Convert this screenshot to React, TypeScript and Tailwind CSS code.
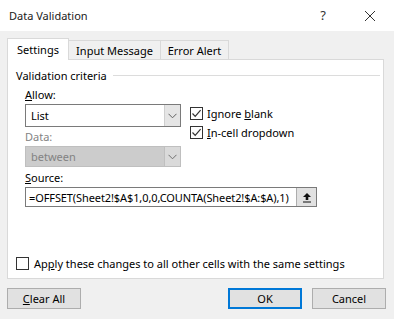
import React from "react";

const font = { fontFamily: '"Noto Sans", "Segoe UI", sans-serif' };

function Chevron({ color = "#606060" }: { color?: string }) {
  return (
    <svg width="9" height="6" viewBox="0 0 9 6">
      <path d="M0.5 0.8 L4.5 4.8 L8.5 0.8" fill="none" stroke={color} strokeWidth="1" />
    </svg>
  );
}

function Check({ checked }: { checked: boolean }) {
  return (
    <div className="w-[13px] h-[13px] border border-[#333333] bg-white flex items-center justify-center shrink-0">
      {checked && (
        <svg width="11" height="11" viewBox="0 0 11 11">
          <path d="M1.5 5.5 L4.2 8.3 L9.6 2.2" fill="none" stroke="#333333" strokeWidth="1.2" />
        </svg>
      )}
    </div>
  );
}

export default function App() {
  return (
    <div className="w-[394px] h-[319px] bg-[#f0f0f0] text-[11px] leading-[15px] text-black overflow-hidden flex flex-col" style={font}>
      <div className="h-[31px] bg-white flex items-center pl-[9px] shrink-0">
        <span className="text-[11px] text-[#1a1a1a]">Data Validation</span>
        <span className="ml-auto w-[12px] text-center text-[13px] text-[#333]">?</span>
        <span className="ml-[35px] mr-[18px] flex">
          <svg width="12" height="12" viewBox="0 0 12 12">
            <path d="M1 1 L11 11 M11 1 L1 11" stroke="#333" strokeWidth="1" />
          </svg>
        </span>
      </div>

      <div className="flex items-end pl-[7px] mt-[7px] h-[22px] relative z-10">
        <div className="h-[22px] w-[62px] bg-white border border-b-0 border-[#d9d9d9] flex items-center justify-center">Settings</div>
        <div className="h-[20px] w-[92px] border-t border-r border-[#d9d9d9] flex items-center justify-center">Input Message</div>
        <div className="h-[20px] w-[68px] border-t border-r border-[#d9d9d9] flex items-center justify-center">Error Alert</div>
      </div>

      <div className="ml-[7px] mt-[-1px] w-[377px] h-[220px] bg-white border border-[#d9d9d9] relative flex flex-col">
        <div className="flex items-center mt-[8px] pl-[8px] pr-[3px]">
          <span>Validation criteria</span>
          <div className="flex-1 h-px bg-[#dcdcdc] ml-[6px]" />
        </div>

        <div className="flex pl-[17px]">
          <div className="flex flex-col w-[156px]">
            <div className="mt-[4px]"><span className="underline">A</span>llow:</div>
            <div className="mt-[2px] h-[23px] border border-[#7a7a7a] flex items-center">
              <span className="pl-[5px] flex-1">List</span>
              <div className="w-[16px] h-full bg-[#e5e5e5] border-l border-[#cfcfcf] flex items-center justify-center">
                <Chevron />
              </div>
            </div>
            <div className="mt-[2px] text-[#838383]">Data:</div>
            <div className="mt-[2px] h-[21px] bg-[#cccccc] border border-[#bfbfbf] flex items-center">
              <span className="pl-[5px] flex-1 text-[#838383]">between</span>
              <div className="w-[16px] h-full bg-[#dadada] border-l border-[#bfbfbf] flex items-center justify-center">
                <Chevron color="#707070" />
              </div>
            </div>
          </div>
          <div className="flex flex-col ml-[9px] mt-[23px] gap-[4px]">
            <div className="flex items-center gap-[4px]">
              <Check checked />
              <span>Ignore <span className="underline">b</span>lank</span>
            </div>
            <div className="flex items-center gap-[4px]">
              <Check checked />
              <span><span className="underline">I</span>n-cell dropdown</span>
            </div>
          </div>
        </div>

        <div className="pl-[17px] mt-[3px]"><span className="underline">S</span>ource:</div>
        <div className="ml-[17px] mt-[2px] flex h-[20px] w-[292px] border border-[#7a7a7a]">
          <div className="flex-1 flex items-center pl-[3px] tracking-[-0.1px] whitespace-nowrap overflow-hidden">=OFFSET(Sheet2!$A$1,0,0,COUNTA(Sheet2!$A:$A),1)</div>
          <div className="w-[20px] h-full bg-[#e1e1e1] border-l border-[#adadad] flex items-center justify-center">
            <svg width="10" height="11" viewBox="0 0 10 11">
              <path d="M5 1 L9 5 L6.3 5 L6.3 8 L3.7 8 L3.7 5 L1 5 Z" fill="#111" />
              <path d="M1 10 L9 10" stroke="#111" strokeWidth="1" />
            </svg>
          </div>
        </div>

        <div className="mt-auto mb-[7px] flex items-center pl-[8px] gap-[5px]">
          <Check checked={false} />
          <span>Ap<span className="underline">p</span>ly these changes to all other cells with the same settings</span>
        </div>
      </div>

      <div className="flex items-center mt-[9px] px-[7px]">
        <div className="w-[74px] h-[21px] bg-[#e1e1e1] border border-[#adadad] flex items-center justify-center">
          <span><span className="underline">C</span>lear All</span>
        </div>
        <div className="ml-auto w-[74px] h-[21px] bg-[#e1e1e1] border-2 border-[#0078d7] flex items-center justify-center">OK</div>
        <div className="ml-[10px] mr-[1px] w-[74px] h-[21px] bg-[#e1e1e1] border border-[#adadad] flex items-center justify-center">Cancel</div>
      </div>
    </div>
  );
}
